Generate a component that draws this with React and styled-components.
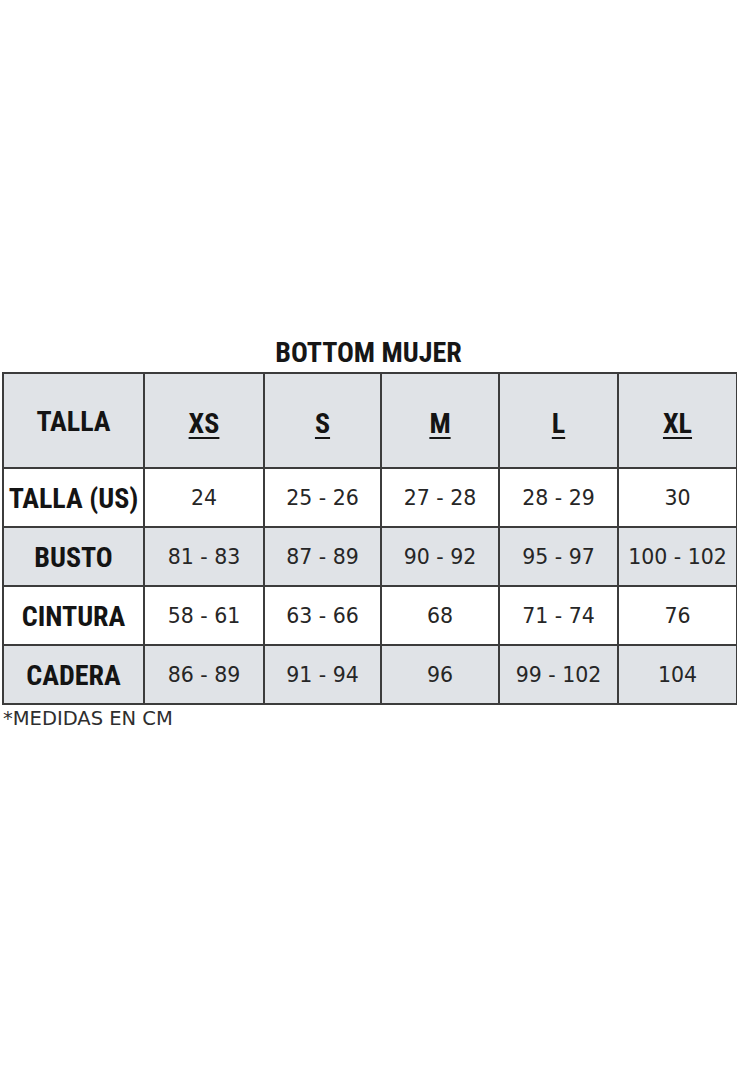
import React from 'react'
import styled, {createGlobalStyle} from 'styled-components'

const GlobalStyle = createGlobalStyle`
  html, body {
    margin: 0;
    padding: 0;
    background: #ffffff;
  }
  body {
    font-family: "DejaVu Sans", "Liberation Sans", sans-serif;
    color: #1d1d1d;
  }
`

const Page = styled.div`
  width: 737px;
  height: 1068px;
  padding-top: 337px;
  box-sizing: border-box;
  display: flex;
  flex-direction: column;
  align-items: flex-start;
`

const Title = styled.h1`
  align-self: center;
  margin: 0 0 4px 0;
  font-family: "Roboto Condensed", "DejaVu Sans Condensed", sans-serif;
  font-weight: 700;
  font-size: 28px;
  line-height: 31px;
  color: #161616;
`

const Table = styled.table`
  margin-left: 2px;
  width: 734px;
  border-collapse: collapse;
  table-layout: fixed;
  border: 2px solid #3c3c3c;
`

const Row = styled.tr`
  height: ${p => p.$tall ? '95px' : '59px'};
  background: ${p => p.$shaded ? '#e0e3e7' : '#ffffff'};
`

const Cell = styled.td`
  border: 2px solid #3c3c3c;
  text-align: center;
  vertical-align: middle;
  padding: 0;
  font-family: "DejaVu Sans", sans-serif;
  font-size: 20.5px;
  color: #262626;
  white-space: nowrap;
`

const LabelCell = styled(Cell)`
  padding-top: 2px;
  font-family: "Roboto Condensed", "DejaVu Sans Condensed", sans-serif;
  font-weight: 700;
  font-size: 28px;
  color: #141414;
`

const SizeCell = styled(LabelCell)`
  padding-top: 6px;
  span {
    text-decoration: underline;
    text-decoration-thickness: 2px;
    text-underline-offset: 4px;
  }
`

const Note = styled.div`
  margin: 2px 0 0 3px;
  font-family: "DejaVu Sans", sans-serif;
  font-size: 19.5px;
  line-height: 24px;
  color: #2e2e2e;
`

const sizes = ['XS', 'S', 'M', 'L', 'XL']
const widths = [141, 120, 117, 118, 119, 119]

const rows = [
    {label: 'TALLA (US)', values: ['24', '25 - 26', '27 - 28', '28 - 29', '30']},
    {label: 'BUSTO', values: ['81 - 83', '87 - 89', '90 - 92', '95 - 97', '100 - 102'], shaded: true},
    {label: 'CINTURA', values: ['58 - 61', '63 - 66', '68', '71 - 74', '76']},
    {label: 'CADERA', values: ['86 - 89', '91 - 94', '96', '99 - 102', '104'], shaded: true}
]

export default function App() {
    return (
        <Page>
            <GlobalStyle/>
            <Title>BOTTOM MUJER</Title>
            <Table>
                <colgroup>
                    {widths.map((w, i) => <col key={i} style={{width: w + 'px'}}/>)}
                </colgroup>
                <tbody>
                <Row $tall $shaded>
                    <LabelCell>TALLA</LabelCell>
                    {sizes.map(s => <SizeCell key={s}><span>{s}</span></SizeCell>)}
                </Row>
                {rows.map(r => (
                    <Row key={r.label} $shaded={r.shaded}>
                        <LabelCell>{r.label}</LabelCell>
                        {r.values.map((v, i) => <Cell key={i}>{v}</Cell>)}
                    </Row>
                ))}
                </tbody>
            </Table>
            <Note>*MEDIDAS EN CM</Note>
        </Page>
    )
}
